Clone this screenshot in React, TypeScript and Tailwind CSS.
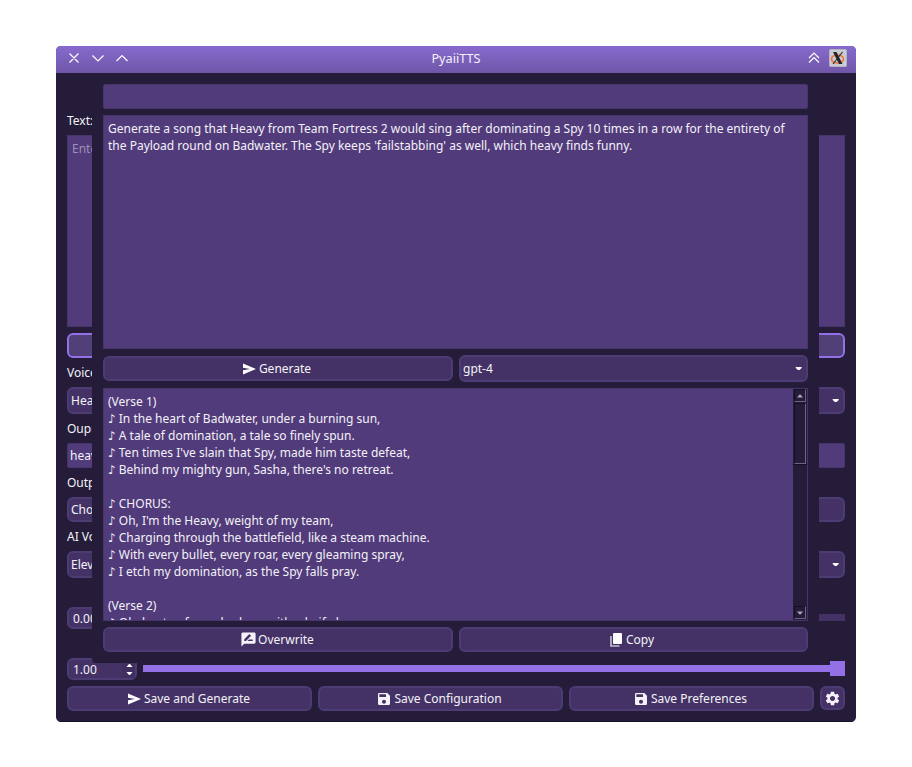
import React from "react";
import { MdSave, MdSettings, MdRateReview } from "react-icons/md";

const BTN =
  "flex items-center justify-center rounded-[6px] border-2 border-[#4d3b73] bg-[#443266] whitespace-nowrap";
const EDIT = "border border-[#463568] bg-[#513b7b]";

function Label({ children }: { children?: React.ReactNode }) {
  return <div className="h-[17px] shrink-0 whitespace-nowrap">{children}</div>;
}

function Chevron() {
  return (
    <svg width="8" height="5" viewBox="0 0 8 5" className="shrink-0" fill="#fff">
      <path d="M0.700 1h6v1L4.500 4H2.900L0.700 2z" />
    </svg>
  );
}

function SendIcon() {
  return (
    <svg width="13" height="12" viewBox="0 0 13 12" className="mr-[3px] shrink-0" fill="#fff">
      <path d="M0 0.500L13 6 0 11.500V7.300L7 6 0 4.700z" />
    </svg>
  );
}

function Combo({ text, className = "" }: { text: string; className?: string }) {
  return (
    <div
      className={`flex h-[27px] shrink-0 items-center justify-between rounded-[6px] border-2 border-[#4d3b73] bg-[#443266] pr-[3px] pl-[2px] ${className}`}
    >
      <span>{text}</span>
      <Chevron />
    </div>
  );
}

function SpinBox({ value }: { value: string }) {
  return (
    <div className="flex h-[22px] w-[70px] shrink-0 items-center justify-between rounded-[6px] border-2 border-[#4d3b73] bg-[#443266] pl-[4px]">
      <span>{value}</span>
      <div className="flex h-full w-[13px] flex-col items-center justify-center bg-[#403060] pl-[2px]">
        <svg width="7" height="12" viewBox="0 0 7 12" fill="#fff">
          <path d="M0.500 4L3 1h1l2.500 3zM0.500 9h6L4 12H3z" />
        </svg>
      </div>
    </div>
  );
}

function CopyIcon() {
  return (
    <svg width="13" height="14" viewBox="0 0 13 14" className="mr-[3px] shrink-0">
      <path d="M1 3v10h8.500" fill="none" stroke="#fff" strokeOpacity="0.7" strokeWidth="1.600" />
      <rect x="3" y="0" width="9" height="11" rx="1" fill="#fff" />
    </svg>
  );
}

function ScrollBar() {
  const bevel =
    "border-t border-l border-t-[#15101f] border-l-[#15101f] border-r border-b border-r-[#6c6384] border-b-[#6c6384]";
  return (
    <div className="flex w-[14px] shrink-0 flex-col bg-[#241c38]">
      <div className={`ml-px flex h-[13px] w-[12px] items-center justify-center ${bevel}`}>
        <svg width="6" height="4" viewBox="0 0 6 4" fill="#aaa4b8">
          <path d="M0 3.500L2.500 0.500h1L6 3.500z" />
        </svg>
      </div>
      <div className={`mt-px ml-px h-[61px] w-[12px] ${bevel}`} />
      <div className="h-px bg-[#15101f]" />
      <div className="flex-1" />
      <div className={`mb-px ml-px flex h-[13px] w-[12px] items-center justify-center ${bevel}`}>
        <svg width="6" height="4" viewBox="0 0 6 4" fill="#aaa4b8">
          <path d="M0 0.500L2.500 3.500h1L6 0.500z" />
        </svg>
      </div>
    </div>
  );
}

const LYRICS = [
  "(Verse 1)",
  "♪ In the heart of Badwater, under a burning sun,",
  "♪ A tale of domination, a tale so finely spun.",
  "♪ Ten times I've slain that Spy, made him taste defeat,",
  "♪ Behind my mighty gun, Sasha, there's no retreat.",
  "",
  "♪ CHORUS:",
  "♪ Oh, I'm the Heavy, weight of my team,",
  "♪ Charging through the battlefield, like a steam machine.",
  "♪ With every bullet, every roar, every gleaming spray,",
  "♪ I etch my domination, as the Spy falls pray.",
  "",
  "(Verse 2)",
  "♪ Oh, beaten from shadows with a knife he",
];

function TitleBar() {
  return (
    <div className="flex h-[27px] shrink-0 items-center justify-between bg-gradient-to-b from-[#876ace] to-[#7056a8] pr-[9px] pl-[12px]">
      <svg width="62" height="12" viewBox="0 0 62 12" fill="none" stroke="#fff" strokeWidth="1.200" className="-mt-[3px]">
        <path d="M1.500 1.500l9 9M10.500 1.500l-9 9M24.500 3.500l5.500 5.500L35.500 3.500M48.500 9L54 3.500 59.500 9" />
      </svg>
      <span className="-mt-[3px] ml-[-25px] text-[12.700px]">PyaiiTTS</span>
      <div className="-mt-[3px] flex items-center gap-[8px]">
        <svg width="14" height="14" viewBox="0 0 14 14" fill="none" stroke="#fff" strokeWidth="1.200">
          <path d="M2 7l5-5 5 5M2 11.500l5-5 5 5" />
        </svg>
        <svg width="18" height="18" viewBox="0 0 18 18">
          <rect x="0.500" y="0.500" width="17" height="17" rx="1" fill="#c9ccd2" stroke="#b4b5bf" />
          <ellipse cx="8.500" cy="10" rx="6" ry="4" fill="none" stroke="#f0733c" strokeWidth="1.600" />
          <path d="M4 3h3.500l6 12H10z" fill="#252529" />
          <path d="M13.500 3L4 15" stroke="#252529" strokeWidth="1.100" />
        </svg>
      </div>
    </div>
  );
}

function Dialog() {
  return (
    <div className="absolute top-0 left-[36px] flex h-[590px] w-[727px] flex-col gap-[6px] rounded-b-[4px] bg-[#241c38] p-[11px]">
      <div className={`h-[25px] shrink-0 rounded-[2px] ${EDIT}`} />
      <div className={`h-[234px] shrink-0 px-[4px] pt-[4px] ${EDIT}`}>
        <p className="whitespace-nowrap">
          Generate a song that Heavy from Team Fortress 2 would sing after dominating a Spy 10 times in a row for the entirety of
          <br />
          the Payload round on Badwater. The Spy keeps 'failstabbing' as well, which heavy finds funny.
        </p>
      </div>
      <div className="flex h-[27px] shrink-0 items-center gap-[6px]">
        <div className={`h-[25px] w-[350px] pr-[2px] ${BTN}`}>
          <SendIcon />
          Generate
        </div>
        <Combo text="gpt-4" className="w-[349px]" />
      </div>
      <div className={`flex h-[233px] shrink-0 overflow-hidden ${EDIT}`}>
        <div className="min-w-0 flex-1 overflow-hidden pt-[4px] pl-[4px]">
          {LYRICS.map((line, i) => (
            <div key={i} className="h-[17px] whitespace-nowrap">
              {line}
            </div>
          ))}
        </div>
        <ScrollBar />
      </div>
      <div className="flex h-[25px] shrink-0 gap-[6px]">
        <div className={`w-[350px] pr-[2px] ${BTN}`}>
          <MdRateReview size={17} className="mr-[1px]" />
          Overwrite
        </div>
        <div className={`w-[349px] pr-[3px] ${BTN}`}>
          <CopyIcon />
          Copy
        </div>
      </div>
    </div>
  );
}

export default function App() {
  return (
    <div className="h-[767px] w-[912px] bg-white px-[56px] pt-[46px] font-['Noto_Sans','DejaVu_Sans',sans-serif] text-[12px] leading-[17px] text-[#f4f2f8]">
      <div className="flex h-[676px] w-[800px] flex-col overflow-hidden rounded-[5px] bg-[#241c38]">
        <TitleBar />
        <div className="relative flex flex-1 flex-col gap-[6px] border-b border-[#171223] px-[11px] pt-[39px]">
          <Label>Text:</Label>
          <div className={`h-[192px] shrink-0 px-[4px] pt-[4px] text-[#9b8fb5] ${EDIT}`}>Enter</div>
          <div className="h-[25px] shrink-0 rounded-[6px] border-2 border-[#9370e6] bg-[#514078]" />
          <Label>Voice</Label>
          <Combo text="Heavy" />
          <Label>Ouput</Label>
          <div className={`h-[25px] shrink-0 rounded-[2px] px-[2px] pt-[3px] ${EDIT}`}>heavy</div>
          <Label>Output</Label>
          <div className="h-[25px] shrink-0 rounded-[6px] border-2 border-[#4d3b73] bg-[#443266] px-[2px] pt-[2px]">Choose</div>
          <Label>AI Voice</Label>
          <Combo text="Eleven" />
          <Label />
          <div className="flex h-[22px] shrink-0 items-center gap-[6px]">
            <SpinBox value="0.00" />
            <div className="mb-px h-[7px] flex-1 bg-[#443266]" />
          </div>
          <Label />
          <div className="flex h-[22px] shrink-0 items-center gap-[6px]">
            <SpinBox value="1.00" />
            <div className="mb-px flex flex-1 items-center">
              <div className="h-[7px] flex-1 bg-[#9370e6]" />
              <div className="h-[15px] w-[15px] bg-[#9370e6]" />
            </div>
          </div>
          <div className="flex h-[25px] shrink-0 gap-[6px]">
            <div className={`w-[245px] pr-px ${BTN}`}>
              <SendIcon />
              Save and Generate
            </div>
            <div className={`w-[245px] pr-[3px] ${BTN}`}>
              <MdSave size={16} className="mr-[2px]" />
              Save Configuration
            </div>
            <div className={`w-[245px] pr-[3px] ${BTN}`}>
              <MdSave size={16} className="mr-[2px]" />
              Save Preferences
            </div>
            <div className={`h-[24px] w-[25px] pr-px ${BTN}`}>
              <MdSettings size={17} className="shrink-0" />
            </div>
          </div>
          <Dialog />
        </div>
      </div>
    </div>
  );
}
